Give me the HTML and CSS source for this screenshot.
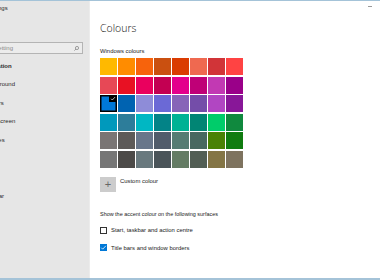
FILE: index.html
```html
<!DOCTYPE html>
<html lang="en">

<head>
    <meta charset="UTF-8">
    <meta name="viewport" content="width=device-width, initial-scale=1.0">
    <title>Settings - Colours</title>
    <link rel="stylesheet" href="styles.css">
</head>

<body>
    <div class="window">
        <aside class="nav">
            <div class="nav-inner">
                <div class="app-title">Settings</div>
                <div class="search">
                    <span class="search-text">Find a setting</span>
                    <svg class="search-icon" viewBox="0 0 10 10" width="5" height="5">
                        <circle cx="6" cy="4" r="3.2" fill="none" stroke="#555" stroke-width="1"/>
                        <line x1="3.7" y1="6.3" x2="0.8" y2="9.2" stroke="#555" stroke-width="1.1"/>
                    </svg>
                </div>
                <div class="nav-head">Personalisation</div>
                <ul class="nav-list">
                    <li>Background</li>
                    <li>Colours</li>
                    <li>Lock screen</li>
                    <li>Themes</li>
                    <li>Fonts</li>
                    <li>Start</li>
                    <li>Taskbar</li>
                </ul>
            </div>
        </aside>

        <main class="content">
            <span class="minimize"></span>
            <h1>Colours</h1>
            <div class="label">Windows colours</div>

            <div class="swatches">
                <div class="swatch" style="background:#ffb900"></div>
                <div class="swatch" style="background:#ff8c00"></div>
                <div class="swatch" style="background:#f7630c"></div>
                <div class="swatch" style="background:#ca5010"></div>
                <div class="swatch" style="background:#da3b01"></div>
                <div class="swatch" style="background:#ef6950"></div>
                <div class="swatch" style="background:#d13438"></div>
                <div class="swatch" style="background:#ff4343"></div>

                <div class="swatch" style="background:#e74856"></div>
                <div class="swatch" style="background:#e81123"></div>
                <div class="swatch" style="background:#ea005e"></div>
                <div class="swatch" style="background:#c30052"></div>
                <div class="swatch" style="background:#e3008c"></div>
                <div class="swatch" style="background:#bf0077"></div>
                <div class="swatch" style="background:#c239b3"></div>
                <div class="swatch" style="background:#9a0089"></div>

                <div class="swatch selected" style="background:#0078d7">
                    <span class="tick">
                        <svg viewBox="0 0 8 8" width="8" height="7">
                            <path d="M1.8 4.3 L3.2 5.7 L6.3 2.4" fill="none" stroke="#fff" stroke-width="0.8"/>
                        </svg>
                    </span>
                </div>
                <div class="swatch" style="background:#0063b1"></div>
                <div class="swatch" style="background:#8e8cd8"></div>
                <div class="swatch" style="background:#6b69d6"></div>
                <div class="swatch" style="background:#8764b8"></div>
                <div class="swatch" style="background:#744da9"></div>
                <div class="swatch" style="background:#b146c2"></div>
                <div class="swatch" style="background:#881798"></div>

                <div class="swatch" style="background:#0099bc"></div>
                <div class="swatch" style="background:#2d7d9a"></div>
                <div class="swatch" style="background:#00b7c3"></div>
                <div class="swatch" style="background:#038387"></div>
                <div class="swatch" style="background:#00b294"></div>
                <div class="swatch" style="background:#018574"></div>
                <div class="swatch" style="background:#00cc6a"></div>
                <div class="swatch" style="background:#10893e"></div>

                <div class="swatch" style="background:#7a7574"></div>
                <div class="swatch" style="background:#5d5a58"></div>
                <div class="swatch" style="background:#68768a"></div>
                <div class="swatch" style="background:#515c6b"></div>
                <div class="swatch" style="background:#567c73"></div>
                <div class="swatch" style="background:#486860"></div>
                <div class="swatch" style="background:#498205"></div>
                <div class="swatch" style="background:#107c10"></div>

                <div class="swatch" style="background:#767676"></div>
                <div class="swatch" style="background:#4c4a48"></div>
                <div class="swatch" style="background:#69797e"></div>
                <div class="swatch" style="background:#4a5459"></div>
                <div class="swatch" style="background:#647c64"></div>
                <div class="swatch" style="background:#525e54"></div>
                <div class="swatch" style="background:#847545"></div>
                <div class="swatch" style="background:#7e735f"></div>
            </div>

            <div class="custom">
                <span class="custom-btn">+</span>
                <span class="custom-text">Custom colour</span>
            </div>

            <div class="label surfaces">Show the accent colour on the following surfaces</div>

            <label class="check-row first">
                <span class="box"></span>
                <span>Start, taskbar and action centre</span>
            </label>
            <label class="check-row">
                <span class="box checked">
                    <svg viewBox="0 0 8 8" width="7" height="7">
                        <path d="M1.4 4.2 L3.1 5.9 L6.7 2.1" fill="none" stroke="#fff" stroke-width="0.9"/>
                    </svg>
                </span>
                <span>Title bars and window borders</span>
            </label>
        </main>
    </div>
</body>

</html>
```

FILE: styles.css
```css
html,
body {
    margin: 0;
    padding: 0;
    background-color: white;
}

body {
    font-family: "Liberation Sans", Arial, sans-serif;
    color: #1a1a1a;
}

.window {
    display: flex;
    width: 380px;
    height: 280px;
    box-sizing: border-box;
    border-top: 1px solid #a4c3d8;
    border-bottom: 2px solid #a4c3d8;
    overflow: hidden;
}

/* left navigation, the window is cut off on the left */
.nav {
    width: 90px;
    flex-shrink: 0;
    background-color: #e6e6e6;
    border-right: 1px solid #ececec;
    box-sizing: border-box;
    overflow: hidden;
}

.nav-inner {
    margin-left: -34px;
    width: 124px;
    font-size: 6px;
    color: #2b2b2b;
}

.app-title {
    padding-left: 20px;
    padding-top: 3px;
    line-height: 8px;
}

.search {
    display: flex;
    align-items: center;
    justify-content: space-between;
    margin: 30px 0 0 2px;
    width: 115px;
    height: 12px;
    box-sizing: border-box;
    border: 1px solid #b4b4b4;
    background-color: #ececec;
    padding: 0 3px 0 8px;
}

.search-text {
    color: #8a8a8a;
}

.nav-head {
    padding-left: 1px;
    margin-top: 8px;
    line-height: 8px;
    font-weight: bold;
}

.nav-list {
    list-style: none;
    margin: 5px 0 0 0;
    padding: 0 0 0 17px;
}

.nav-list li {
    line-height: 18.7px;
}

/* main panel */
.content {
    position: relative;
    flex: 1;
    padding: 20px 0 0 10px;
    font-size: 5.9px;
}

.minimize {
    position: absolute;
    top: 5px;
    right: 8px;
    width: 4px;
    height: 1px;
    background-color: #9a9a9a;
}

h1 {
    margin: 0;
    font-family: "Open Sans", sans-serif;
    font-weight: 300;
    font-size: 10.5px;
    line-height: 14px;
    color: #111;
}

.label {
    margin-top: 12px;
    line-height: 8px;
}

.swatches {
    display: grid;
    grid-template-columns: repeat(8, 17px);
    grid-auto-rows: 17px;
    column-gap: 1px;
    row-gap: 1.5px;
    margin-top: 3px;
}

.swatch {
    position: relative;
}

.selected {
    box-shadow: inset 0 0 0 1.5px #000;
}

.tick {
    position: absolute;
    top: 0;
    right: 0;
    width: 8px;
    height: 7px;
    background-color: #000;
    display: flex;
}

.custom {
    display: flex;
    align-items: flex-start;
    gap: 4px;
    margin-top: 9.5px;
}

.custom-btn {
    width: 16px;
    height: 15px;
    background-color: #cccccc;
    color: #666;
    font-size: 11px;
    line-height: 15px;
    text-align: center;
    font-weight: 300;
}

.custom-text {
    line-height: 8px;
}

.surfaces {
    margin-top: 18px;
    font-size: 5.45px;
}

.check-row {
    display: flex;
    align-items: center;
    gap: 4px;
    margin-top: 9.5px;
    line-height: 8px;
}

.check-row.first {
    margin-top: 8px;
}

.box {
    width: 7px;
    height: 7px;
    box-sizing: border-box;
    border: 1px solid #333;
    background-color: white;
    display: flex;
}

.box.checked {
    border: none;
    background-color: #0078d7;
}
```
